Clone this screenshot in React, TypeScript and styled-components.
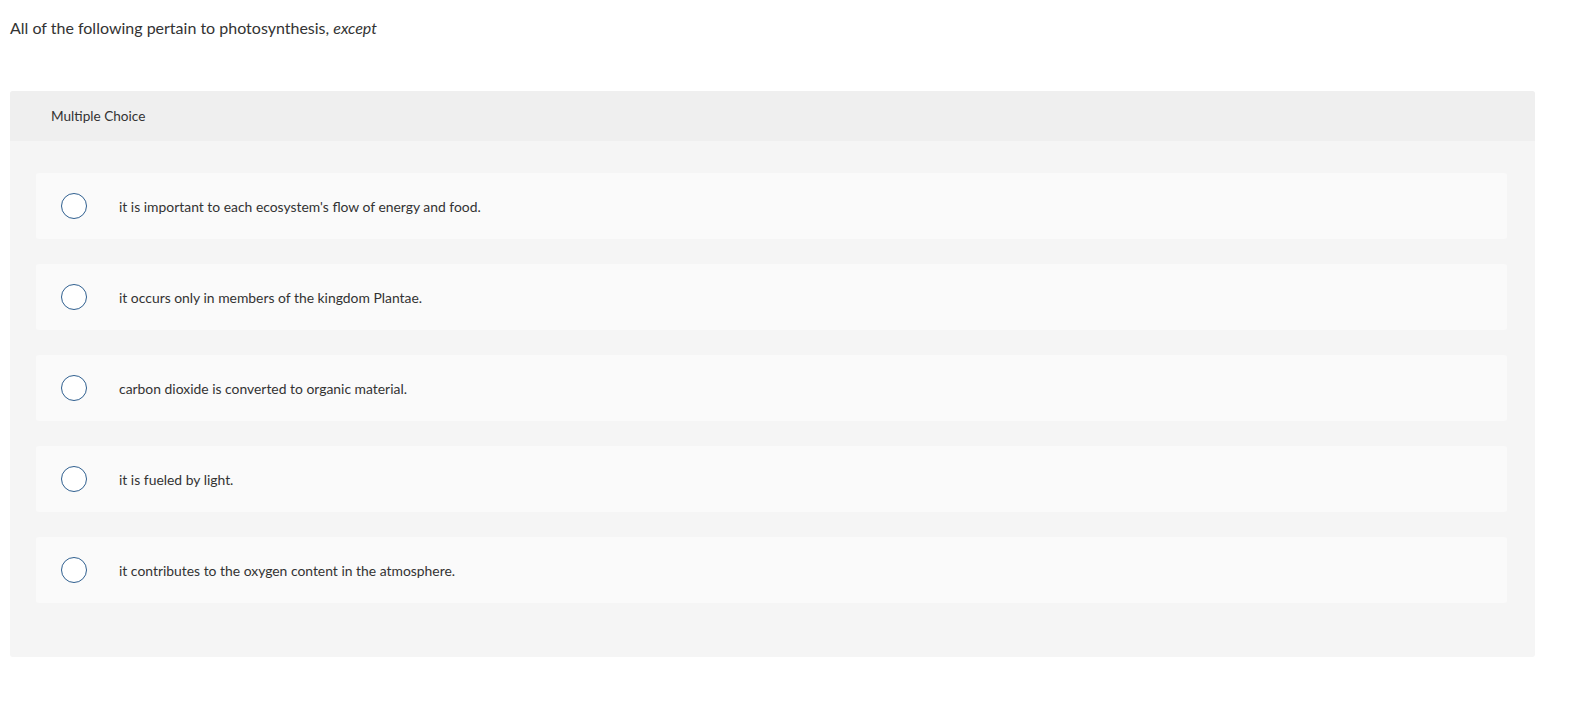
import React from "react";
import styled, { createGlobalStyle } from "styled-components";

const Global = createGlobalStyle`
  html, body { margin: 0; padding: 0; background: #fff; }
  body { font-family: Lato, "Open Sans", sans-serif; color: #333; }
`;

const Page = styled.div`
  padding: 18px 52px 0 10px;
`;

const Prompt = styled.p`
  margin: 0;
  font-size: 16px;
  line-height: 20px;
  color: #333;
  em { font-style: italic; }
`;

const Panel = styled.section`
  margin-top: 53px;
  background: #f5f5f5;
  border-radius: 3px;
  overflow: hidden;
`;

const Header = styled.div`
  height: 50px;
  display: flex;
  align-items: center;
  padding-left: 41px;
  background: #efefef;
  font-size: 13.6px;
  color: #333;
`;

const List = styled.div`
  display: flex;
  flex-direction: column;
  gap: 25px;
  padding: 32px 28px 54px 26px;
`;

const Option = styled.label`
  height: 66px;
  display: flex;
  align-items: center;
  background: #fafafa;
  border-radius: 3px;
  padding-left: 25px;
  cursor: pointer;
`;

const Radio = styled.span`
  width: 24px;
  height: 24px;
  border: 1.5px solid #2f5f8f;
  border-radius: 50%;
  background: #fff;
  flex: none;
`;

const OptionText = styled.span`
  margin-left: 32px;
  font-size: 13.9px;
  color: #333;
`;

const options = [
  "it is important to each ecosystem's flow of energy and food.",
  "it occurs only in members of the kingdom Plantae.",
  "carbon dioxide is converted to organic material.",
  "it is fueled by light.",
  "it contributes to the oxygen content in the atmosphere.",
];

export default function App() {
  return (
    <>
      <Global />
      <Page>
        <Prompt>
          All of the following pertain to photosynthesis, <em>except</em>
        </Prompt>
        <Panel>
          <Header>Multiple Choice</Header>
          <List>
            {options.map((o) => (
              <Option key={o}>
                <Radio />
                <OptionText>{o}</OptionText>
              </Option>
            ))}
          </List>
        </Panel>
      </Page>
    </>
  );
}
